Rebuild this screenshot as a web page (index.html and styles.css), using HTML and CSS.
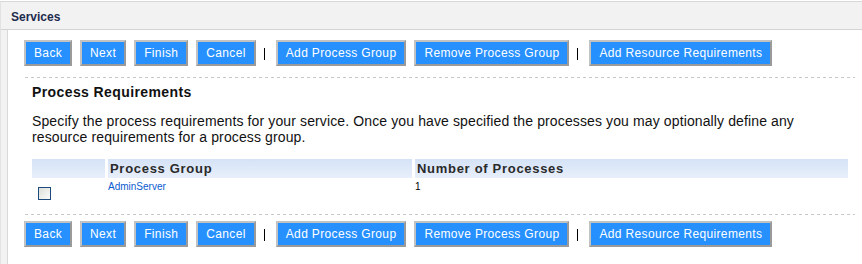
FILE: index.html
```html
<!DOCTYPE html>
<html lang="en">
<head>
    <meta charset="UTF-8">
    <title>Services</title>
    <link rel="stylesheet" href="styles.css">
</head>
<body>
    <div class="portlet">
        <div class="portlet-title">Services</div>
        <div class="portlet-body">
            <div class="button-bar">
                <button>Back</button>
                <button>Next</button>
                <button>Finish</button>
                <button>Cancel</button>
                <span class="sep"></span>
                <button>Add Process Group</button>
                <button>Remove Process Group</button>
                <span class="sep"></span>
                <button>Add Resource Requirements</button>
            </div>
            <div class="rule"></div>

            <div class="section">
                <h2>Process Requirements</h2>
                <p class="intro">Specify the process requirements for your service. Once you have specified the processes you may optionally define any resource requirements for a process group.</p>

                <table class="grid">
                    <thead>
                        <tr>
                            <th class="col-check"></th>
                            <th class="col-group">Process Group</th>
                            <th>Number of Processes</th>
                        </tr>
                    </thead>
                    <tbody>
                        <tr>
                            <td><input type="checkbox" class="check"></td>
                            <td class="cell-text"><a href="#">AdminServer</a></td>
                            <td class="cell-text">1</td>
                        </tr>
                    </tbody>
                </table>
            </div>

            <div class="rule rule-bottom"></div>
            <div class="button-bar button-bar-bottom">
                <button>Back</button>
                <button>Next</button>
                <button>Finish</button>
                <button>Cancel</button>
                <span class="sep"></span>
                <button>Add Process Group</button>
                <button>Remove Process Group</button>
                <span class="sep"></span>
                <button>Add Resource Requirements</button>
            </div>
        </div>
    </div>
</body>
</html>
```

FILE: styles.css
```css
body { margin: 0; padding-top: 1px; font-family: "Liberation Sans", Arial, sans-serif; color: #000; background: #fff; }
.portlet { border-top: 1px solid #d8d8d8; border-left: 1px solid #e2e2e2; background: #f2f2f2; height: 262px; }
.portlet-title { height: 19px; padding: 8px 0 0 10px; border-bottom: 1px solid #d4d4d4; font-size: 12px; line-height: 14px; font-weight: bold; color: #1e2b4d; }
.portlet-body { margin-left: 6px; border-left: 1px solid #d8d8d8; background: #fff; padding: 10px 7px 20px 16px; height: 212px; }

.button-bar { display: flex; align-items: center; gap: 8px; height: 26px; }
.button-bar-bottom { margin-top: 6px; }
.button-bar button { height: 26px; padding: 0 8px; font-family: "Liberation Sans", Arial, sans-serif; font-size: 12px; letter-spacing: 0.35px; color: #fff; background: #2690ff; border: 2px solid #a9a9a9; border-color: #c2c2c2 #9a9a9a #9a9a9a #c2c2c2; border-radius: 0; cursor: pointer; }
.sep { width: 1px; height: 12px; background: #000; margin: 1px 3px 0 0; }

.rule { height: 1px; margin: 11px 0 0 1px; background: repeating-linear-gradient(to right, #c8c8c8 0 3px, transparent 3px 6px); }
.rule-bottom { margin-top: 14px; }

.section { padding: 0 7px 0 8px; }
.section h2 { margin: 6px 0 0; font-size: 14px; line-height: 16px; font-weight: bold; letter-spacing: 0.4px; color: #111; }
.intro { margin: 13px 0 0; max-width: 800px; font-size: 14px; line-height: 16px; letter-spacing: 0.12px; color: #111; }

.grid { width: calc(100% + 6px); margin: 14px -3px 0; border-collapse: separate; border-spacing: 3px 0; }
.grid th { height: 19px; padding: 0 0 0 2px; text-align: left; font-size: 13px; line-height: 19px; font-weight: bold; letter-spacing: 0.7px; color: #2a2a2a; background: linear-gradient(#d5e3f7, #e8effa); }
.grid .col-check { width: 71px; }
.grid .col-group { width: 302px; }
.grid td { padding: 0; vertical-align: top; }
.grid .cell-text { padding-top: 3px; font-size: 10px; line-height: 12px; }
.grid a { color: #0a5bd0; text-decoration: none; }
.check { -webkit-appearance: none; appearance: none; display: block; width: 13px; height: 13px; margin: 9px 0 0 6px; border: 1px solid #1c4a7c; background: linear-gradient(135deg, #deded8, #fbfbfb); }
```
